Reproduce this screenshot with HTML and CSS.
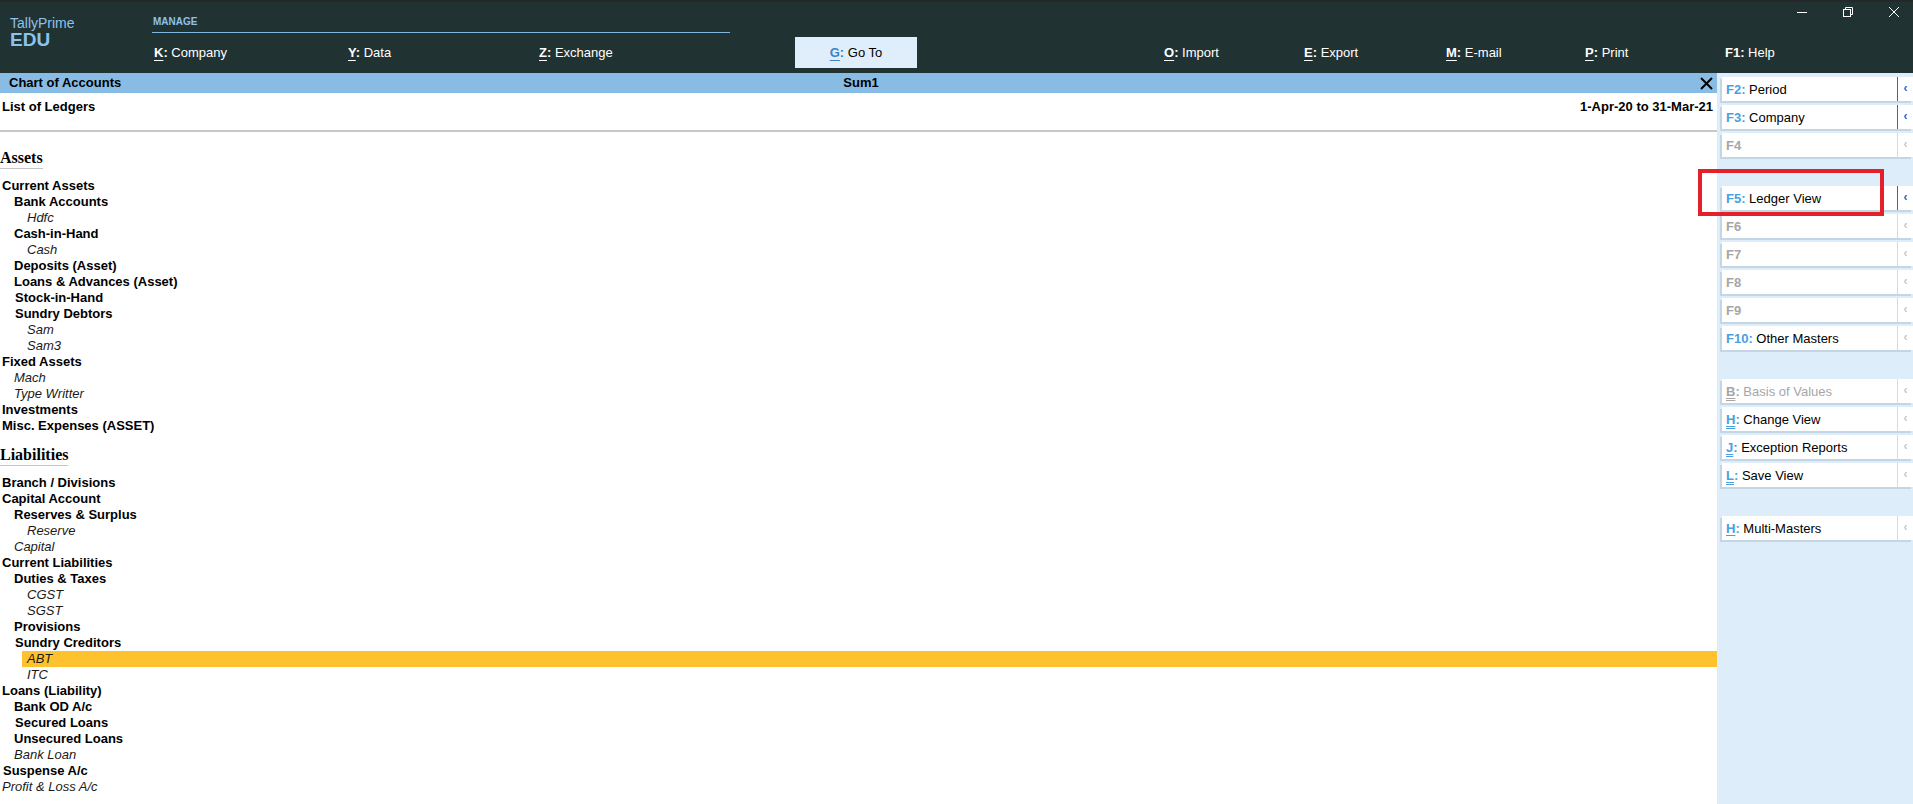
FILE: index.html
```html
<!DOCTYPE html>
<html>
<head>
<meta charset="utf-8">
<link rel="stylesheet" href="styles.css">
</head>
<body>
<div class="app">
  <header class="topbar">
    <div class="brand">
      <div class="brand-name">TallyPrime</div>
      <div class="brand-edu">EDU</div>
    </div>
    <div class="menu-area">
      <div class="manage">MANAGE</div>
      <nav class="menu">
        <div class="mi w-k"><b><u>K</u>:</b> Company</div>
        <div class="mi w-y"><b><u>Y</u>:</b> Data</div>
        <div class="mi w-z"><b><u>Z</u>:</b> Exchange</div>
        <div class="mi goto"><b><u>G</u>:</b> Go To</div>
        <div class="mi w-o"><b><u>O</u>:</b> Import</div>
        <div class="mi w-e"><b><u>E</u>:</b> Export</div>
        <div class="mi w-m"><b><u>M</u>:</b> E-mail</div>
        <div class="mi w-p"><b><u>P</u>:</b> Print</div>
        <div class="mi"><b>F1:</b> Help</div>
      </nav>
    </div>
    <div class="winctl">
      <svg class="wc-min" width="12" height="12" viewBox="0 0 12 12"><line x1="1" y1="6.5" x2="11" y2="6.5" stroke="#fff" stroke-width="1"/></svg>
      <svg class="wc-max" width="12" height="12" viewBox="0 0 12 12"><rect x="1.5" y="3.5" width="7" height="7" fill="none" stroke="#fff"/><path d="M3.5 3.5V1.5h7v7h-2" fill="none" stroke="#fff"/></svg>
      <svg class="wc-close" width="12" height="12" viewBox="0 0 12 12"><path d="M1 1L11 11M11 1L1 11" stroke="#fff" stroke-width="1"/></svg>
    </div>
  </header>

  <div class="body">
    <main class="main">
      <div class="titlebar">
        <span class="tb-left">Chart of Accounts</span>
        <span class="tb-center">Sum1</span>
        <span class="tb-right">
          <svg width="13" height="13" viewBox="0 0 13 13"><path d="M1 1L12 12M12 1L1 12" stroke="#000" stroke-width="2"/></svg>
        </span>
      </div>
      <div class="listhead">
        <span>List of Ledgers</span>
        <span>1-Apr-20 to 31-Mar-21</span>
      </div>
      <div class="tree">
        <div class="sect"><span class="sect-title">Assets</span></div>
        <div class="row g0">Current Assets</div>
        <div class="row g1">Bank Accounts</div>
        <div class="row l2">Hdfc</div>
        <div class="row g1">Cash-in-Hand</div>
        <div class="row l2">Cash</div>
        <div class="row g1">Deposits (Asset)</div>
        <div class="row g1">Loans &amp; Advances (Asset)</div>
        <div class="row g1 nudge">Stock-in-Hand</div>
        <div class="row g1 nudge">Sundry Debtors</div>
        <div class="row l2">Sam</div>
        <div class="row l2">Sam3</div>
        <div class="row g0">Fixed Assets</div>
        <div class="row l1">Mach</div>
        <div class="row l1">Type Writter</div>
        <div class="row g0">Investments</div>
        <div class="row g0">Misc. Expenses (ASSET)</div>

        <div class="sect sect-2"><span class="sect-title">Liabilities</span></div>
        <div class="row g0">Branch / Divisions</div>
        <div class="row g0">Capital Account</div>
        <div class="row g1">Reserves &amp; Surplus</div>
        <div class="row l2">Reserve</div>
        <div class="row l1">Capital</div>
        <div class="row g0">Current Liabilities</div>
        <div class="row g1">Duties &amp; Taxes</div>
        <div class="row l2">CGST</div>
        <div class="row l2">SGST</div>
        <div class="row g1">Provisions</div>
        <div class="row g1 nudge">Sundry Creditors</div>
        <div class="row l2 sel"><span class="sel-bar">ABT</span></div>
        <div class="row l2">ITC</div>
        <div class="row g0">Loans (Liability)</div>
        <div class="row g1">Bank OD A/c</div>
        <div class="row g1 nudge">Secured Loans</div>
        <div class="row g1">Unsecured Loans</div>
        <div class="row l1">Bank Loan</div>
        <div class="row g0 nudge">Suspense A/c</div>
        <div class="row l0">Profit &amp; Loss A/c</div>
      </div>
    </main>

    <aside class="side">
      <div class="sb on"><span class="lbl"><b class="k">F2:</b> Period</span><span class="arr">‹</span></div>
      <div class="sb on"><span class="lbl"><b class="k">F3:</b> Company</span><span class="arr">‹</span></div>
      <div class="sb off"><span class="lbl"><b class="k">F4</b></span><span class="arr">‹</span></div>

      <div class="sb on gap"><span class="lbl"><b class="k">F5:</b> Ledger View</span><span class="arr">‹</span></div>
      <div class="sb off"><span class="lbl"><b class="k">F6</b></span><span class="arr">‹</span></div>
      <div class="sb off"><span class="lbl"><b class="k">F7</b></span><span class="arr">‹</span></div>
      <div class="sb off"><span class="lbl"><b class="k">F8</b></span><span class="arr">‹</span></div>
      <div class="sb off"><span class="lbl"><b class="k">F9</b></span><span class="arr">‹</span></div>
      <div class="sb"><span class="lbl"><b class="k">F10:</b> Other Masters</span><span class="arr">‹</span></div>

      <div class="sb off gap"><span class="lbl"><b class="k"><u class="dbl">B</u>:</b> Basis of Values</span><span class="arr">‹</span></div>
      <div class="sb"><span class="lbl"><b class="k"><u class="dbl">H</u>:</b> Change View</span><span class="arr">‹</span></div>
      <div class="sb"><span class="lbl"><b class="k"><u class="dbl">J</u>:</b> Exception Reports</span><span class="arr">‹</span></div>
      <div class="sb"><span class="lbl"><b class="k"><u class="dbl">L</u>:</b> Save View</span><span class="arr">‹</span></div>

      <div class="sb gap"><span class="lbl"><b class="k"><u>H</u>:</b> Multi-Masters</span><span class="arr">‹</span></div>

      <div class="mark"></div>
    </aside>
  </div>
</div>
</body>
</html>
```

FILE: styles.css
```css
html, body {
  margin: 0;
  padding: 0;
}
body {
  width: 1913px;
  height: 804px;
  overflow: hidden;
  font-family: "Liberation Sans", Arial, sans-serif;
  font-size: 13px;
  color: #000;
  background: #fff;
}

/* ---------- top bar ---------- */
.topbar {
  position: relative;
  display: flex;
  height: 73px;
  box-sizing: border-box;
  border-top: 2px solid #262727;
  background: #213233;
}
.brand {
  width: 152px;
  box-sizing: border-box;
  padding: 13px 0 0 10px;
  color: #8cc3ec;
}
.brand-name {
  font-size: 14px;
  line-height: 16px;
}
.brand-edu {
  font-size: 19px;
  line-height: 20px;
  font-weight: bold;
  margin-top: -1px;
}
.menu-area {
  flex: 1;
  padding-top: 14px;
}
.manage {
  width: 577px;
  padding: 0 0 4px 1px;
  font-size: 10px;
  line-height: 12px;
  font-weight: bold;
  color: #8cc3ec;
  border-bottom: 1px solid #7fb6df;
}
.menu {
  display: flex;
  align-items: center;
  height: 31px;
  margin-top: 4px;
  padding-left: 2px;
  color: #fff;
  font-size: 13px;
}
.mi b {
  font-weight: bold;
}
.mi u {
  text-decoration: underline;
  text-underline-offset: 3px;
}
.w-k { width: 194px; }
.w-y { width: 191px; }
.w-z { width: 256px; }
.goto {
  width: 122px;
  height: 31px;
  line-height: 31px;
  text-align: center;
  background: #dfeefa;
  color: #000;
  margin-right: 247px;
}
.goto b { color: #3a84c8; }
.w-o { width: 140px; }
.w-e { width: 142px; }
.w-m { width: 139px; }
.w-p { width: 140px; }

.winctl {
  position: absolute;
  top: 4px;
  right: 0;
  display: flex;
  gap: 34px;
  padding-right: 13px;
}

/* ---------- body ---------- */
.body {
  display: flex;
  height: 731px;
}
.main {
  flex: 1;
  min-width: 0;
}
.titlebar {
  display: grid;
  grid-template-columns: 1fr auto 1fr;
  align-items: center;
  height: 20px;
  padding: 0 4px 0 9px;
  background: #88bce4;
  font-weight: bold;
  line-height: 20px;
}
.tb-right {
  display: flex;
  justify-content: flex-end;
}
.tb-right svg { display: block; }
.listhead {
  display: flex;
  justify-content: space-between;
  height: 39px;
  box-sizing: border-box;
  padding: 6px 4px 0 2px;
  font-weight: bold;
  line-height: 16px;
  border-bottom: 2px solid #c8c8c8;
}

.tree {
  padding-top: 16px;
}
.sect {
  line-height: 20px;
  margin-bottom: 9px;
}
.sect-2 {
  margin-top: 11px;
}
.sect-title {
  display: inline-block;
  font-family: "Liberation Serif", "Times New Roman", serif;
  font-weight: bold;
  font-size: 16px;
  border-bottom: 1px solid #c4c4c4;
}
.row {
  height: 16px;
  line-height: 16px;
  white-space: nowrap;
}
.g0 { padding-left: 2px; font-weight: bold; }
.g1 { padding-left: 14px; font-weight: bold; }
.nudge { padding-left: 15px; }
.g0.nudge { padding-left: 3px; }
.l0 { padding-left: 2px; font-style: italic; color: #1a1a1a; }
.l1 { padding-left: 14px; font-style: italic; color: #1a1a1a; }
.l2 { padding-left: 27px; font-style: italic; color: #1a1a1a; }
.row.sel {
  padding-left: 22px;
}
.sel-bar {
  display: block;
  padding-left: 5px;
  background: #fec22f;
}

/* ---------- side bar ---------- */
.side {
  position: relative;
  width: 196px;
  box-sizing: border-box;
  padding-top: 4px;
  background: #ddeefa;
}
.sb {
  display: flex;
  align-items: center;
  height: 24px;
  margin: 0 0 4px 5px;
  background: #fff;
  box-shadow: -2px 2px 0 #c4d5e3;
  font-size: 13px;
}
.sb.gap {
  margin-top: 29px;
}
.lbl {
  flex: 1;
  padding-left: 4px;
  white-space: nowrap;
}
.k {
  color: #4a9fe0;
  font-weight: bold;
}
.k u {
  text-decoration: underline;
  text-underline-offset: 2px;
}
.k u.dbl {
  text-decoration-style: double;
}
.arr {
  width: 15px;
  height: 24px;
  line-height: 22px;
  text-align: center;
  border-left: 1px solid #dadada;
  color: #c8c8c8;
  font-size: 12px;
  font-weight: bold;
}
.sb.on .arr {
  border-left-color: #2a6cbf;
  color: #1f66bd;
}
.sb.off .lbl,
.sb.off .k {
  color: #a6a6a6;
}

.mark {
  position: absolute;
  left: -19px;
  top: 96px;
  width: 186px;
  height: 47px;
  box-sizing: border-box;
  border: 4px solid #e4202a;
}
```
